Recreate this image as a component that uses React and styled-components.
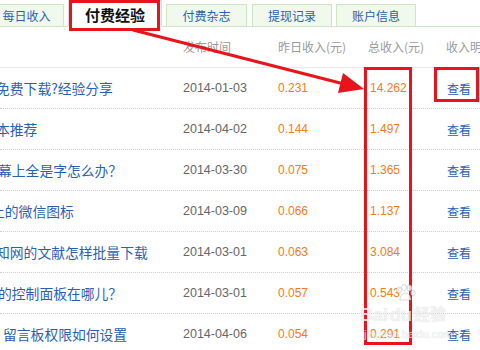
import React from 'react'
import styled, { createGlobalStyle } from 'styled-components'

const GlobalStyle = createGlobalStyle`
  html, body {
    margin: 0;
    padding: 0;
    background: #fff;
    overflow: hidden;
  }
  body {
    font-family: "Liberation Sans", "Noto Sans CJK SC", sans-serif;
  }
`

const Page = styled.div`
  position: relative;
  width: 480px;
  height: 350px;
  overflow: hidden;
`

const Tabs = styled.div`
  display: flex;
  align-items: flex-end;
  height: 26px;
  border-bottom: 1px solid #cde7c5;
`

const Tab = styled.div`
  flex: none;
  box-sizing: border-box;
  width: ${p => p.$w || 80}px;
  height: 23px;
  margin-left: ${p => (p.$ml !== undefined ? p.$ml : 4)}px;
  margin-bottom: -1px;
  border: 1px solid #cde7c5;
  background: #f0f9ec;
  color: #2b5fb3;
  font-family: "Noto Sans CJK SC", sans-serif;
  font-size: 12px;
  line-height: 22px;
  text-align: center;
`

const ActiveTab = styled(Tab)`
  height: 27px;
  border-color: #ddd;
  border-bottom: 1px solid #fff;
  background: #fff;
  color: #111;
  font-size: 15px;
  font-weight: bold;
  line-height: 27px;
`

const Grid = styled.div`
  display: grid;
  grid-template-columns: 183px 95px 90px 78px 120px;
  align-items: center;
  height: 40px;
  border-bottom: 1px ${p => (p.$head ? 'solid #e8e8e8' : 'dotted #cfcfcf')};
  white-space: nowrap;
`

const HeadCell = styled.div`
  font-family: "Noto Sans CJK SC", sans-serif;
  font-size: 12px;
  color: #9a9a9a;
  line-height: 16px;
`

const Title = styled.div`
  overflow: hidden;
  font-family: "Noto Sans CJK SC", sans-serif;
  font-size: 13.8px;
  line-height: 18px;
  color: #2b5fb3;

  & > span {
    display: block;
    margin-left: ${p => p.$indent}px;
  }
`

const DateCell = styled.div`
  font-size: 12.5px;
  color: #666;
`

const Money = styled.div`
  font-size: 12px;
  color: #f47b20;
  padding-left: ${p => p.$pl || 0}px;
`

const Link = styled.div`
  font-family: "Noto Sans CJK SC", sans-serif;
  font-size: 12px;
  color: #2b5fb3;
  padding-left: 1px;
`

const RedBox = styled.div`
  position: absolute;
  box-sizing: border-box;
  left: ${p => p.$x}px;
  top: ${p => p.$y}px;
  width: ${p => p.$w}px;
  height: ${p => p.$h}px;
  border: 3px solid #e8141c;
  pointer-events: none;
`

const Arrow = styled.svg`
  position: absolute;
  left: 0;
  top: 0;
  pointer-events: none;
`

const Watermark = styled.div`
  position: absolute;
  left: 360px;
  top: 284px;
  display: flex;
  flex-direction: column;
  align-items: flex-start;
  color: rgba(255, 255, 255, 0.7);
  text-shadow: 0 0 1px rgba(140, 140, 140, 0.4);
  pointer-events: none;
`

const MarkLine = styled.div`
  display: flex;
  align-items: flex-end;
  gap: 2px;
  font-family: "Liberation Sans", "Noto Sans CJK SC", sans-serif;
  font-weight: bold;
  font-size: 18px;
  line-height: 18px;
`

const MarkSub = styled.div`
  font-family: "Liberation Sans", sans-serif;
  font-size: 11px;
  line-height: 12px;
  margin-top: 4px;
  margin-left: 4px;
`

const rows = [
  { title: '免费下载?经验分享', indent: -4, date: '2014-01-03', day: '0.231', total: '14.262' },
  { title: '本推荐', indent: -4, date: '2014-04-02', day: '0.144', total: '1.497' },
  { title: '幕上全是字怎么办？', indent: -2, date: '2014-03-30', day: '0.075', total: '1.365' },
  { title: '上的微信图标', indent: -9, date: '2014-03-09', day: '0.066', total: '1.137' },
  { title: '知网的文献怎样批量下载', indent: -4, date: '2014-03-01', day: '0.063', total: '3.084' },
  { title: '的控制面板在哪儿？', indent: -2, date: '2014-03-01', day: '0.057', total: '0.543' },
  { title: '留言板权限如何设置', indent: 3, date: '2014-04-06', day: '0.054', total: '0.291' },
]

const Paw = () => (
  <svg width="22" height="18" viewBox="0 0 22 18">
    <g fill="rgba(255,255,255,0.75)" stroke="rgba(140,140,140,0.4)" strokeWidth="0.8">
      <ellipse cx="5" cy="6" rx="2.5" ry="3" />
      <ellipse cx="10" cy="3.5" rx="2.5" ry="3" />
      <ellipse cx="15.5" cy="4" rx="2.5" ry="3" />
      <ellipse cx="19" cy="9" rx="2.3" ry="2.8" />
      <path d="M6 16 C6 11 9 9 11.5 9 C14.5 9 17 12 17 16 Z" />
    </g>
  </svg>
)

export default function App() {
  return (
    <Page>
      <GlobalStyle />
      <Tabs>
        <Tab $ml={-11} $w={75}>每日收入</Tab>
        <ActiveTab $w={94}>付费经验</ActiveTab>
        <Tab $w={81}>付费杂志</Tab>
        <Tab $ml={5}>提现记录</Tab>
        <Tab>账户信息</Tab>
      </Tabs>
      <Grid $head>
        <HeadCell />
        <HeadCell>发布时间</HeadCell>
        <HeadCell>昨日收入(元)</HeadCell>
        <HeadCell>总收入(元)</HeadCell>
        <HeadCell>收入明细</HeadCell>
      </Grid>
      {rows.map(r => (
        <Grid key={r.date + r.total}>
          <Title $indent={r.indent}><span>{r.title}</span></Title>
          <DateCell>{r.date}</DateCell>
          <Money>{r.day}</Money>
          <Money $pl={2}>{r.total}</Money>
          <Link>查看</Link>
        </Grid>
      ))}

      <RedBox $x={69} $y={0} $w={91} $h={31} />
      <RedBox $x={364} $y={67} $w={48} $h={278} />
      <RedBox $x={434} $y={67} $w={45} $h={35} />

      <Arrow width="480" height="350" viewBox="0 0 480 350">
        <line x1="133" y1="30" x2="346" y2="84.5" stroke="#e8141c" strokeWidth="3" />
        <polygon points="364,89 338,93 343,73" fill="#e8141c" />
      </Arrow>

      <Watermark>
        <div style={{ marginLeft: 34 }}><Paw /></div>
        <MarkLine>
          <span>Bai</span>
          <span>du</span>
          <span style={{ fontSize: 16 }}>经验</span>
        </MarkLine>
        <MarkSub>jingyan.baidu.com</MarkSub>
      </Watermark>
    </Page>
  )
}
